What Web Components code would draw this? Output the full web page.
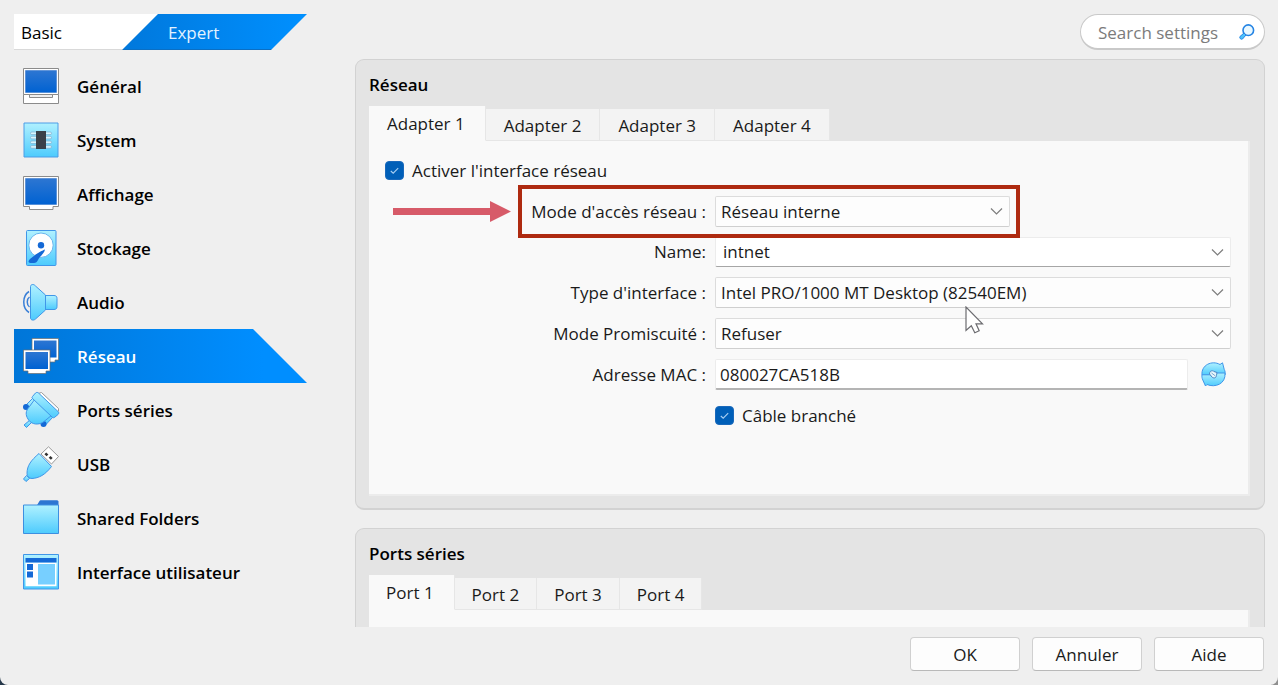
<!DOCTYPE html>
<html lang="fr">
<head>
<meta charset="utf-8">
<title>Réseau</title>
<style>
  html { height: 100%; background: linear-gradient(90deg, #26384a, #26384a 50%, #8f8f8f 50%); }
  body { margin: 0; height: 100%; font: 17px/24px "Open Sans", "Noto Sans", sans-serif; color: #1a1a1a; }
</style>
</head>
<body>
<settings-window>
  <mode-switch slot="mode"></mode-switch>
  <search-box slot="search"></search-box>
  <nav-item slot="nav" icon="general">Général</nav-item>
  <nav-item slot="nav" icon="system">System</nav-item>
  <nav-item slot="nav" icon="display">Affichage</nav-item>
  <nav-item slot="nav" icon="storage">Stockage</nav-item>
  <nav-item slot="nav" icon="audio">Audio</nav-item>
  <nav-item slot="nav" icon="network" selected>Réseau</nav-item>
  <nav-item slot="nav" icon="serial">Ports séries</nav-item>
  <nav-item slot="nav" icon="usb">USB</nav-item>
  <nav-item slot="nav" icon="folder">Shared Folders</nav-item>
  <nav-item slot="nav" icon="ui">Interface utilisateur</nav-item>

  <settings-group heading="Réseau" roomy>
    <tab-button slot="tabs" selected>Adapter 1</tab-button>
    <tab-button slot="tabs">Adapter 2</tab-button>
    <tab-button slot="tabs">Adapter 3</tab-button>
    <tab-button slot="tabs">Adapter 4</tab-button>
    <check-field label="Activer l'interface réseau"></check-field>
    <select-field label="Mode d'accès réseau :" value="Réseau interne" marked></select-field>
    <select-field label="Name:" value="intnet" editable></select-field>
    <select-field label="Type d'interface :" value="Intel PRO/1000 MT Desktop (82540EM)" pointer></select-field>
    <select-field label="Mode Promiscuité :" value="Refuser"></select-field>
    <mac-field label="Adresse MAC :" value="080027CA518B"></mac-field>
    <check-field label="Câble branché" indent></check-field>
  </settings-group>

  <settings-group heading="Ports séries">
    <tab-button slot="tabs" selected>Port 1</tab-button>
    <tab-button slot="tabs">Port 2</tab-button>
    <tab-button slot="tabs">Port 3</tab-button>
    <tab-button slot="tabs">Port 4</tab-button>
  </settings-group>

  <push-button slot="actions">OK</push-button>
  <push-button slot="actions">Annuler</push-button>
  <push-button slot="actions">Aide</push-button>
</settings-window>

<script>
const base = `<style>
  *, *::before, *::after { box-sizing: border-box; }
  button, input, select { font: inherit; color: inherit; margin: 0; }
  svg { display: block; }
</style>`;

function define(name, markup) {
  customElements.define(name, class extends HTMLElement {
    constructor() {
      super();
      this.attachShadow({ mode: 'open' });
    }
    connectedCallback() {
      this.shadowRoot.innerHTML = base + (typeof markup === 'function' ? markup(this) : markup);
    }
  });
}

/* Gradients shared by every category icon */
const defs = `<defs>
  <linearGradient id="c" x1="0" y1="0" x2="0" y2="1"><stop offset="0" stop-color="#b0f1ff"/><stop offset="1" stop-color="#4dcbfd"/></linearGradient>
  <linearGradient id="b" x1="0" y1="0" x2="0" y2="1"><stop offset="0" stop-color="#2d76d2"/><stop offset="1" stop-color="#0062d2"/></linearGradient>
</defs>`;

const icons = {
  general: `<path d="M.5.5h35v26h-35z" fill="#fff" stroke="#8b8b8b"/><path d="M2.500 2.500h31v22h-31z" fill="url(#b)" stroke="#2a6fcb" stroke-width=".5"/><path d="M.5 26.500h6v3h23v-3h6v9h-35z" fill="#fff" stroke="#8b8b8b"/>`,
  system: `<path d="M1 1h34v34H1z" fill="url(#c)" stroke="#4c9de6"/><g fill="#d8f7ff" stroke="#7fa9cc" stroke-width=".7"><rect x="7.500" y="10" width="21" height="2.600" rx="1.300"/><rect x="7.500" y="14.300" width="21" height="2.600" rx="1.300"/><rect x="7.500" y="19" width="21" height="2.600" rx="1.300"/><rect x="7.500" y="23.600" width="21" height="2.600" rx="1.300"/></g><path d="M13 9h10v18H13z" fill="#3a4049"/>`,
  display: `<path d="M.5.500h35v30h-5.500v3H6.500v-3h-6z" fill="#fff" stroke="#8b8b8b"/><path d="M2.500 2.500h31v26h-31z" fill="url(#b)" stroke="#2a6fcb" stroke-width=".5"/>`,
  storage: `<rect x="3.500" y=".5" width="29.500" height="35" rx="1" fill="url(#c)" stroke="#4096e8"/><circle cx="18" cy="15.200" r="12.200" fill="#fff" stroke="#68b6ee"/><circle cx="18" cy="15.200" r="3.200" fill="#1469d6"/><path d="M22 19.500c-3 1-10 5-15 9.500-2 2-2 4 .5 4H11c2 0 3-1 4-3 2-4 6-6 7-10.500z" fill="#1469d6"/>`,
  audio: `<path d="M6 7.500C-1 12-1 24 6 28.500M6.500 13c-3 2-3 8 0 10" fill="none" stroke="#397fd7" stroke-width="1.500"/><path d="M22 11.500h9c2 0 3 1 3 3v8c0 2-1 3-3 3h-9z" fill="url(#c)" stroke="#4096e8"/><path d="M7.500 2.500c0-2 3-3 5-.5L22.500 11v15l-10 9c-2 2-5 1-5-1z" fill="url(#c)" stroke="#4096e8"/>`,
  network: `<path d="M9 .5h26.500V22H32v2h-9V22H9z" fill="#fff" stroke="#6d6d6d" stroke-width=".7"/><path d="M11 2.500h22.500v17H11z" fill="url(#b)"/><path d="M.5 12H27v21h-4v2.500H5V33H.5z" fill="#fff" stroke="#6d6d6d" stroke-width=".7"/><path d="M2.500 14H25v17H2.500z" fill="url(#b)"/>`,
  serial: `<path d="m15 1.500 3.500-1 17 16v2.500l-4 4" fill="#fff" stroke="#9a9a9a"/><path d="m7 28-6 5 2.500 2.500L9 30z" fill="url(#c)" stroke="#4096e8"/><path d="m3 13 7-7 2.500 2.500-7.500 8zM19 30.500l8-8 2.500 3-7 7.500z" fill="url(#c)" stroke="#4096e8"/><circle cx="3" cy="15" r="3" fill="#1469d6"/><circle cx="20.500" cy="32" r="3" fill="#1469d6"/><path d="M12 7 29 23 21 29.500c-5 4-12 3-15-1s-4-8-1-12z" fill="url(#c)" stroke="#4096e8"/><path d="m9.500 4.500 3-3.500c1-.8 2-.8 3 0L35 19.500c1 1 1 2 0 3L32 25c-1 1-2 1-3 0L9.500 6.500c-.7-.7-.7-1.300 0-2z" fill="url(#c)" stroke="#4096e8"/>`,
  usb: `<path d="M18 8 25.500.8 35.500 10.500 28.500 18z" fill="#fff" stroke="#9a9a9a"/><path d="m23.200 6.500 2.200 2-1.800 1.800-2.200-2zM27.500 10l2.200 2-1.800 1.800-2.200-2z" fill="#333"/><path d="m3.500 29.500-3 3.500 2.500 2.500 3.500-3z" fill="url(#c)" stroke="#4096e8"/><path d="M16 7.500 28.500 20.500C22 29 16 32 9 32.500c-3 0-5-2-5-5 0-8 4-13 12-20z" fill="url(#c)" stroke="#4096e8"/>`,
  folder: `<path d="m13.500 6 3-5c.3-.5.7-.7 1-.7H34c.6 0 1 .4 1.500 1V6z" fill="#2d76d2"/><path d="M.5 5h35v28.500H.5z" fill="url(#c)" stroke="#3d8fe0"/>`,
  ui: `<path d="M.5.5h35v34.500H.5z" fill="url(#c)" stroke="#4096e8"/><path d="M2.500 8.500h31v23.800h-31z" fill="#fff"/><path d="M2.500 4h31v4.500h-31zM4 10h6v6H4zM4 17.500h6v6H4z" fill="#1469d6"/><path d="M15 10h17v20.500H15z" fill="#77cfff"/>`
};

define('category-icon', el => `<style>
  :host { display: block; width: 36px; height: 36px; flex: none; }
  svg { overflow: visible; }
</style><svg width="36" height="36" viewBox="0 0 36 36" aria-hidden="true">${defs}${icons[el.getAttribute('name')]}</svg>`);

define('settings-window', `<style>
  :host { display: flex; flex-direction: column; gap: 9px; height: 100%; padding: 14px 13px 14px 14px; background: #efefef; border-radius: 0 0 8px 8px; overflow: hidden; box-sizing: border-box; }
  header { display: flex; justify-content: space-between; flex: none; }
  .main { display: flex; flex: 1; min-height: 0; gap: 48px; }
  nav { flex: 0 0 293px; display: flex; flex-direction: column; }
  main { flex: 1; min-width: 0; overflow: hidden; display: flex; flex-direction: column; gap: 18px; }
  footer { flex: none; display: flex; justify-content: flex-end; gap: 12px; padding: 1px 1px 0 0; }
</style>
<header><slot name="mode"></slot><slot name="search"></slot></header>
<div class="main"><nav><slot name="nav"></slot></nav><main><slot></slot></main></div>
<footer><slot name="actions"></slot></footer>`);

define('mode-switch', `<style>
  :host { display: flex; height: 36px; width: 293px; }
  button { border: 0; padding: 2px 0 0; text-align: left; }
  .basic { width: 144px; padding-left: 7px; background: #fff; border-bottom: 1px solid #d9d9d9; clip-path: polygon(0 0, 100% 0, calc(100% - 36px) 100%, 0 100%); color: #000; }
  .expert { flex: 1; margin-left: -36px; padding-left: 46px; background: linear-gradient(90deg, #0078dc, #0090ff); color: #e3f2ff; clip-path: polygon(36px 0, 100% 0, calc(100% - 36px) 100%, 0 100%); border-bottom: 1px solid #0b6fc4; }
</style><button class="basic" type="button">Basic</button><button class="expert" type="button">Expert</button>`);

define('search-box', `<style>
  :host { display: flex; align-items: center; width: 185px; height: 36px; box-sizing: border-box; padding: 0 9px 0 17px; background: #fff; border: 1px solid #c9c9c9; border-bottom-width: 2px; border-radius: 18px; }
  input { flex: 1; min-width: 0; border: 0; padding: 2px 0 0; outline: 0; background: none; height: 32px; }
  input::placeholder { color: #7b7b7b; opacity: 1; }
</style><input type="text" placeholder="Search settings" aria-label="Search settings">
<svg width="16" height="16" viewBox="0 0 16 16" aria-hidden="true"><circle cx="9.300" cy="6.200" r="5.300" fill="#e9f8ff" stroke="#2584e4" stroke-width="1.600"/><path d="m5 9-4 3.500c-1 1.500 1 3.500 2.500 2.500L7 11z" fill="#4cc2fb" stroke="#2584e4"/></svg>`);

define('nav-item', el => `<style>
  :host { display: block; flex: none; }
  a { display: flex; align-items: center; gap: 18px; height: 54px; padding-left: 9px; color: #000; font-weight: 600; text-decoration: none; }
  span { padding-top: 2px; }
  :host([selected]) a { color: #fff; background: linear-gradient(90deg, #0076d8, #008eff 85%); clip-path: polygon(0 0, calc(100% - 54px) 0, 100% 100%, 0 100%); }
</style><a href="#"><category-icon name="${el.getAttribute('icon')}"></category-icon><span><slot></slot></span></a>`);

define('settings-group', el => `<style>
  :host { display: block; flex: none; padding: 13px 14px 12px 13px; background: #e4e4e4; border: 1px solid #d2d2d2; border-bottom-width: 2px; border-radius: 9px; --tab-space: 17px; }
  :host([roomy]) { --tab-space: 18px; }
  h2 { margin: 0; font-size: 17px; line-height: 24px; font-weight: 600; color: #000; }
  .tabs { display: flex; align-items: flex-end; height: 35px; margin-top: 9px; }
  .page { display: flex; flex-direction: column; gap: 10px; padding: 14px 17px 63px 16px; min-height: 180px; background: #f9f9f9; border-right: 2px solid #ececec; border-bottom: 2px solid #ececec; }
</style><h2>${el.getAttribute('heading')}</h2>
<div class="tabs" role="tablist"><slot name="tabs"></slot></div>
<div class="page"><slot></slot></div>`);

define('tab-button', `<style>
  :host { display: block; }
  button { display: block; height: 32px; padding: 2px var(--tab-space) 0; border: solid #e6e6e6; border-width: 0 1px 1px 0; background: #f3f3f3; }
  :host([selected]) button { height: 35px; background: #f9f9f9; border-bottom-color: #f9f9f9; padding-right: 20px; }
</style><button type="button" role="tab"><slot></slot></button>`);

define('check-field', el => `<style>
  :host { display: flex; align-items: center; height: 31px; }
  :host([indent]) { padding-left: 330px; }
  .box { display: grid; width: 19px; height: 19px; margin-right: 8px; }
  .box > * { grid-area: 1 / 1; }
  input { appearance: none; width: 19px; height: 19px; border: 1px solid #1a69bb; border-radius: 4px; background: #005fb8; }
  svg { pointer-events: none; }
</style><span class="box"><input id="f" type="checkbox" checked><svg width="19" height="19" viewBox="0 0 19 19" aria-hidden="true"><path d="m5.800 10 2.400 2.200 5-5" fill="none" stroke="#a9d0f3" stroke-width="1.100"/></svg></span>
<label for="f">${el.getAttribute('label')}</label>`);

const rowStyle = `
  :host { display: grid; grid-template-columns: 321px minmax(0, 1fr); column-gap: 9px; align-items: center; height: 31px; position: relative; }
  :host([editable]) { height: 30px; }
  label { text-align: right; white-space: nowrap; }
`;

define('select-field', el => `<style>${rowStyle}
  .control { display: grid; align-items: center; height: 100%; position: relative; }
  .control > select, .control > .chevron { grid-area: 1 / 1; }
  select { appearance: none; width: 100%; height: 100%; padding: 0 30px 0 5px; border: 1px solid #dcdcdc; border-bottom-color: #cfcfcf; border-radius: 2px; background: #fdfdfd; outline: 0; }
  :host([editable]) select { background: #fff; border-color: #ececec; border-bottom-color: #a6a6a6; padding-left: 7px; }
  :host([marked]) .control { width: 295px; }
  .chevron { justify-self: end; margin-right: 7px; pointer-events: none; }
  .frame { position: absolute; left: 133px; top: -11px; width: 502px; height: 53px; border: 4px solid #ae2a10; pointer-events: none; z-index: 1; }
  .arrow { position: absolute; left: 8px; top: 5px; }
  .pointer { position: absolute; left: 249px; top: 29px; z-index: 2; pointer-events: none; }
</style><label for="f">${el.getAttribute('label')}</label>
<div class="control"><select id="f"><option>${el.getAttribute('value')}</option></select>
<svg class="chevron" width="13" height="9" viewBox="0 0 13 9" aria-hidden="true"><path d="m1 1.500 5.500 5.500L12 1.500" fill="none" stroke="#7d7d7d" stroke-width="1.200"/></svg>
${el.hasAttribute('pointer') ? `<svg class="pointer" width="22" height="30" viewBox="0 0 22 30" aria-hidden="true"><path d="M2 1v23.500l5.300-4.700 3.500 7 4.400-2-3.200-7h6.500z" fill="#fff" stroke="#6c6c70" stroke-width="1.200"/></svg>` : ''}</div>
${el.hasAttribute('marked') ? `<svg class="arrow" width="119" height="21" viewBox="0 0 119 21" aria-hidden="true"><path d="M0 7h97V0l21 10.500L97 21v-7H0z" fill="#d75b69"/></svg><div class="frame"></div>` : ''}`);

define('mac-field', el => `<style>${rowStyle}
  .control { display: flex; align-items: center; padding-right: 5px; gap: 13px; }
  input { flex: 1; min-width: 0; height: 31px; padding: 0 4px; background: #fff; border: 1px solid #ececec; border-bottom: 2px solid #b4b4b4; border-radius: 2px; outline: 0; }
  button { width: 25px; height: 25px; padding: 0; border: 0; background: none; }
</style><label for="f">${el.getAttribute('label')}</label>
<div class="control"><input id="f" type="text" value="${el.getAttribute('value')}">
<button type="button" aria-label="Actualiser"><svg width="25" height="25" viewBox="0 0 25 25">${defs}<path d="M1 13C0 3 11-2 19 2.500L21.500.8l1.700 6.500c1 2 1.300 4 .8 5.700h-9l-2.500-3.500-3 3.500z" fill="url(#c)" stroke="#4096e8"/><path d="M24 11c1 11-10 15-18 11.500L4.500 24 1.800 18C1 16 .7 15 1 12.800h8.500l3 3.200L15 11z" fill="url(#c)" stroke="#4096e8"/><path d="M8.500 12c0-4 4-3.500 4.500-2.500l3 1-.5 3c-.5 3.500-4 2.500-4.500 1.500z" fill="#e6f6fc" stroke="#4c88c4"/><path d="m10.500 11 4 3" stroke="#7aa9cf"/></svg></button></div>`);

define('push-button', `<style>
  :host { display: block; width: 110px; }
  button { display: block; width: 100%; height: 34px; padding: 2px 0 0; background: #fdfdfd; border: 1px solid #d0d0d0; border-bottom-color: #b9b9b9; border-radius: 4px; }
</style><button type="button"><slot></slot></button>`);
</script>
</body>
</html>
